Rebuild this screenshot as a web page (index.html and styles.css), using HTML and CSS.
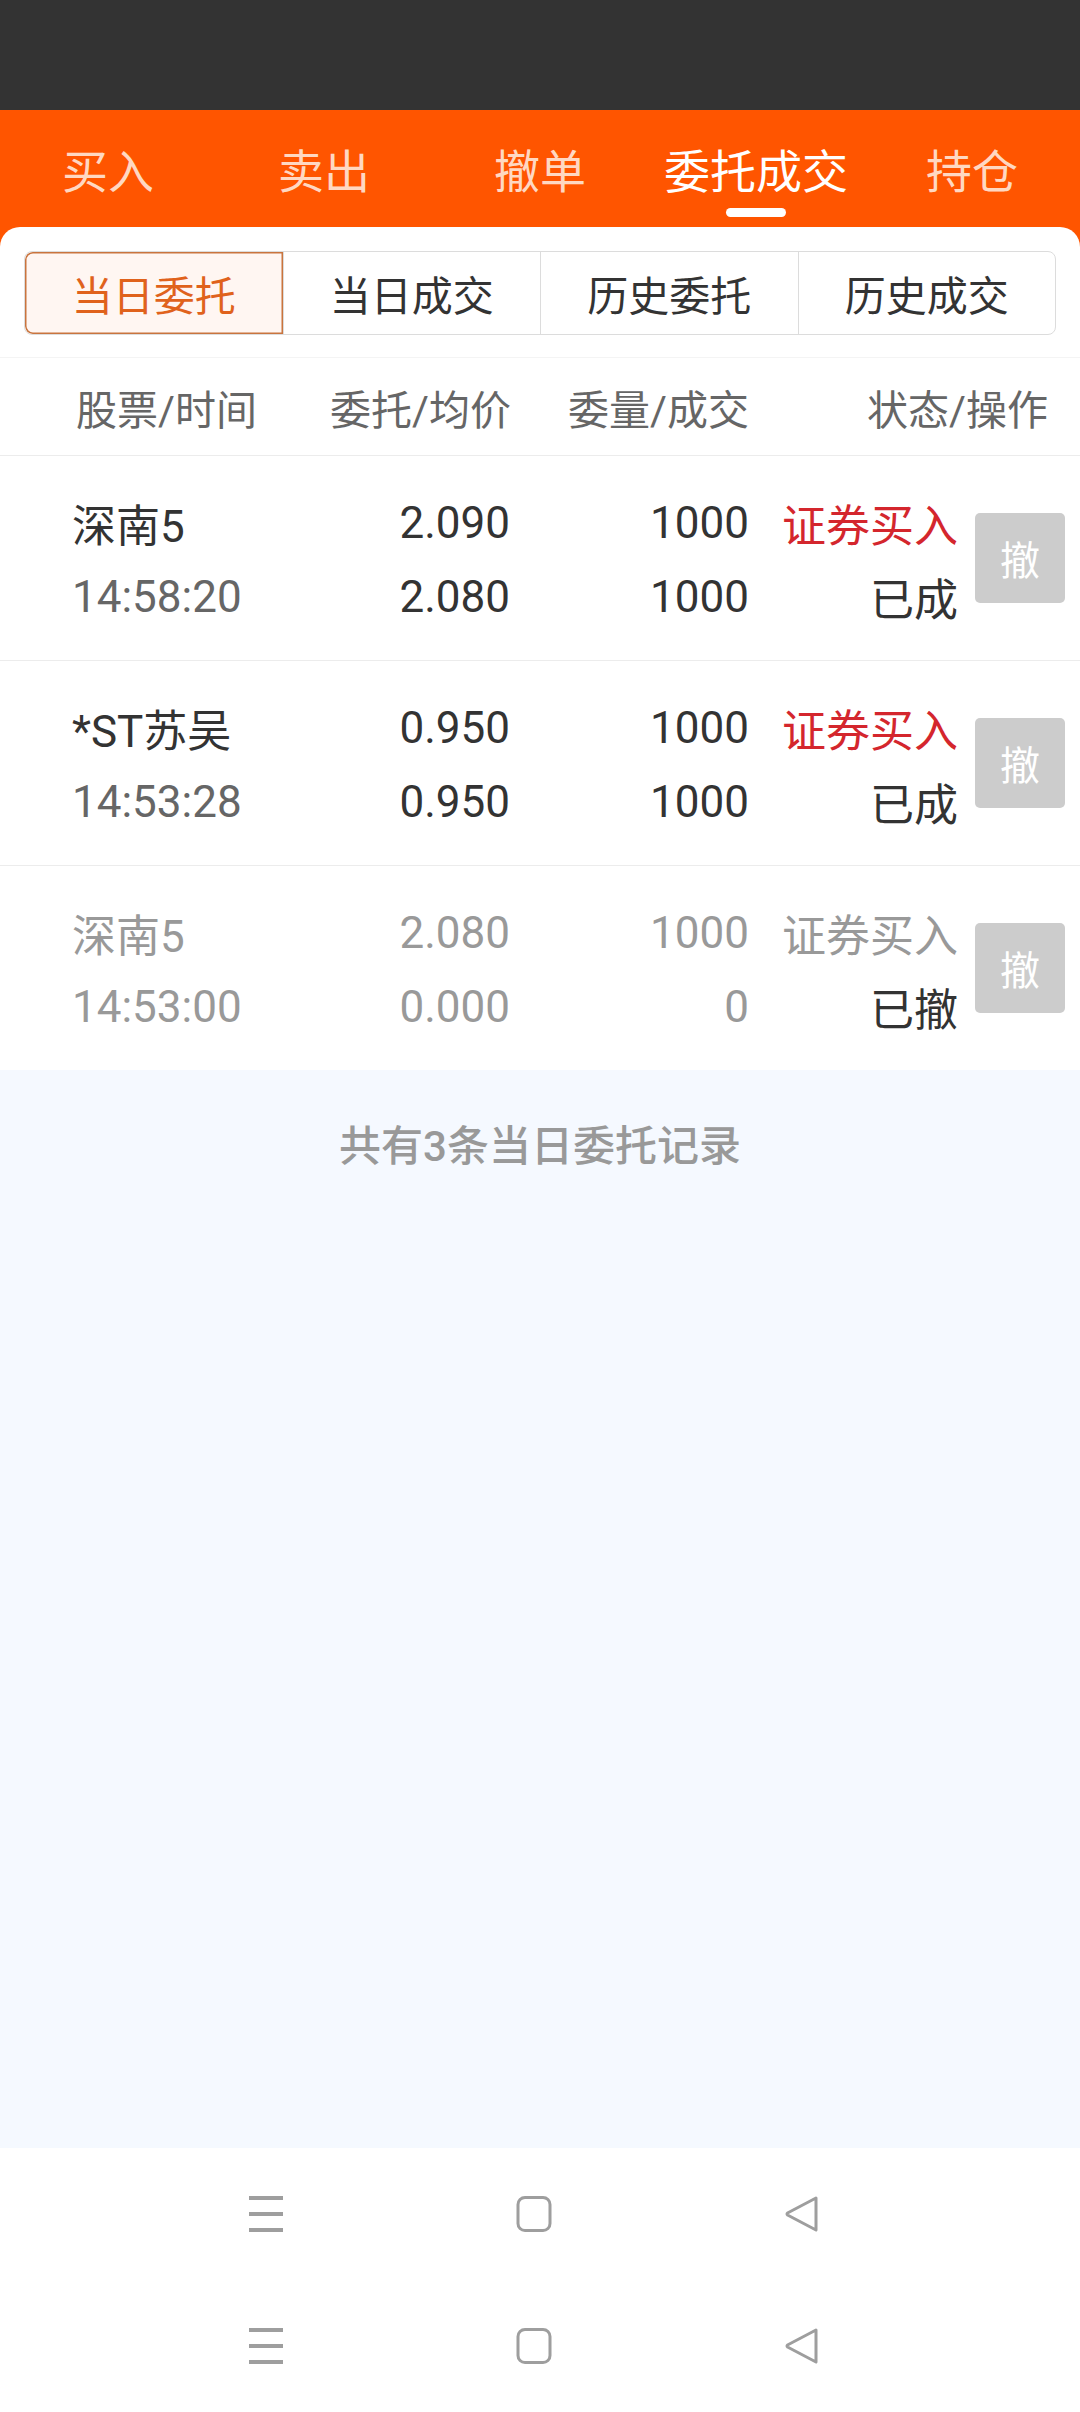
FILE: index.html
```html
<!DOCTYPE html>
<html lang="zh-CN">
<head>
<meta charset="utf-8">
<title>委托成交</title>
<link rel="stylesheet" href="styles.css">
</head>
<body>
<div class="statusbar"></div>
<div class="top">
  <nav class="tabs">
    <div class="tab"><span class="tab-label">买入</span></div>
    <div class="tab"><span class="tab-label">卖出</span></div>
    <div class="tab"><span class="tab-label">撤单</span></div>
    <div class="tab active"><span class="tab-label">委托成交</span><span class="indicator"></span></div>
    <div class="tab"><span class="tab-label">持仓</span></div>
  </nav>
  <div class="card-top">
    <div class="segments">
      <div class="seg active">当日委托</div>
      <div class="seg">当日成交</div>
      <div class="seg">历史委托</div>
      <div class="seg">历史成交</div>
    </div>
  </div>
</div>
<div class="table">
  <div class="thead">
    <span class="th">股票/时间</span>
    <span class="th num">委托/均价</span>
    <span class="th num">委量/成交</span>
    <span class="th num">状态/操作</span>
  </div>
  <div class="row">
    <div class="cells">
      <span class="name">深南5</span>
      <span class="num">2.090</span>
      <span class="num">1000</span>
      <span class="num red">证券买入</span>
      <span class="time">14:58:20</span>
      <span class="num">2.080</span>
      <span class="num">1000</span>
      <span class="num">已成</span>
    </div>
    <div class="btn">撤</div>
  </div>
  <div class="row">
    <div class="cells">
      <span class="name">*ST苏吴</span>
      <span class="num">0.950</span>
      <span class="num">1000</span>
      <span class="num red">证券买入</span>
      <span class="time">14:53:28</span>
      <span class="num">0.950</span>
      <span class="num">1000</span>
      <span class="num">已成</span>
    </div>
    <div class="btn">撤</div>
  </div>
  <div class="row last muted">
    <div class="cells">
      <span class="name">深南5</span>
      <span class="num">2.080</span>
      <span class="num">1000</span>
      <span class="num">证券买入</span>
      <span class="time">14:53:00</span>
      <span class="num">0.000</span>
      <span class="num">0</span>
      <span class="num status">已撤</span>
    </div>
    <div class="btn">撤</div>
  </div>
</div>
<div class="empty"><p class="empty-text">共有3条当日委托记录</p></div>
<div class="navbar">
  <div class="navrow">
    <svg class="navicon" width="36" height="36" viewBox="0 0 36 36"><path d="M1 2h34M1 18h34M1 34h34" stroke="#9e9e9e" stroke-width="4" fill="none"/></svg>
    <svg class="navicon" width="36" height="36" viewBox="0 0 36 36"><rect x="2" y="1.5" width="32" height="33" rx="7" fill="none" stroke="#9e9e9e" stroke-width="3"/></svg>
    <svg class="navicon" width="36" height="36" viewBox="0 0 36 36"><path d="M32 2 L3.5 17 Q2.5 18 3.5 19 L32 34 Z" fill="none" stroke="#9e9e9e" stroke-width="3" stroke-linejoin="round"/></svg>
  </div>
  <div class="navrow">
    <svg class="navicon" width="36" height="36" viewBox="0 0 36 36"><path d="M1 2h34M1 18h34M1 34h34" stroke="#9e9e9e" stroke-width="4" fill="none"/></svg>
    <svg class="navicon" width="36" height="36" viewBox="0 0 36 36"><rect x="2" y="1.5" width="32" height="33" rx="7" fill="none" stroke="#9e9e9e" stroke-width="3"/></svg>
    <svg class="navicon" width="36" height="36" viewBox="0 0 36 36"><path d="M32 2 L3.5 17 Q2.5 18 3.5 19 L32 34 Z" fill="none" stroke="#9e9e9e" stroke-width="3" stroke-linejoin="round"/></svg>
  </div>
</div>
</body>
</html>
```

FILE: styles.css
```css
* { box-sizing: border-box; }
html, body { margin: 0; padding: 0; }
body {
  width: 1080px;
  height: 2412px;
  display: flex;
  flex-direction: column;
  font-family: Roboto, "Noto Sans CJK SC", sans-serif;
  color: #333;
  background: #fff;
  overflow: hidden;
}
.statusbar { height: 110px; background: #333333; flex: none; }
.top { background: #ff5500; flex: none; }
.tabs { display: grid; grid-template-columns: repeat(5, 1fr); height: 117px; }
.tab { display: flex; flex-direction: column; align-items: center; padding-top: 32px; }
.tab-label { font-size: 46px; line-height: 60px; color: #ffd8c2; white-space: nowrap; }
.tab.active .tab-label { color: #fff; }
.indicator { width: 60px; height: 9px; border-radius: 5px; background: #fff; margin-top: 6px; }
.card-top {
  background: #fff;
  border-radius: 20px 20px 0 0;
  padding: 24px 24px 22px;
}
.segments {
  display: grid;
  grid-template-columns: repeat(4, 1fr);
  height: 84px;
  border: 1.5px solid #dcdcdc;
  border-radius: 8px;
  overflow: hidden;
}
.seg {
  display: flex; align-items: center; justify-content: center;
  font-size: 41px; color: #333;
  border-left: 1.5px solid #dcdcdc;
}
.seg:first-child { border-left: none; }
.seg.active {
  color: #e0621c;
  background: #fff6f2;
  box-shadow: inset 0 0 0 1.5px #c9743e;
  border-radius: 8px 0 0 8px;
}
.table { background: #fff; flex: none; }
.thead {
  display: grid;
  grid-template-columns: 254px 180px 239px 1fr;
  height: 99px;
  align-items: center;
  padding: 0 32px 0 76px;
  border-top: 1px solid #f4f4f4;
  border-bottom: 1px solid #ececec;
  font-size: 41px;
  color: #666;
}
.th { white-space: nowrap; }
.num { text-align: right; white-space: nowrap; }
.row {
  display: flex;
  align-items: center;
  height: 205px;
  padding: 0 15px 0 72px;
  border-bottom: 1px solid #ececec;
}
.row.last { border-bottom: none; height: 204px; }
.cells {
  display: grid;
  grid-template-columns: 258px 180px 239px 209px;
  grid-auto-rows: 74px;
  align-items: center;
  font-size: 44px;
  color: #333;
  margin-top: 4px;
}
.name { white-space: nowrap; }
.time { color: #666; }
.red { color: #d4262d; }
.row.muted .cells span { color: #999; }
.row.muted .cells .status { color: #333; }
.btn {
  margin-left: 17px;
  width: 90px; height: 90px;
  border-radius: 5px;
  background: #cccccc;
  color: #fff;
  font-size: 40px;
  display: flex; align-items: center; justify-content: center;
}
.empty { flex: 1; background: #f5f9ff; padding-top: 47px; }
.empty-text {
  margin: 0;
  text-align: center;
  font-size: 42px;
  line-height: 60px;
  font-weight: 500;
  color: #999;
}
.navbar { flex: none; height: 264px; background: #fff; }
.navrow {
  height: 132px;
  display: flex;
  align-items: center;
  justify-content: center;
  gap: 232px;
  padding-right: 12px;
}
.navicon { display: block; }
```
